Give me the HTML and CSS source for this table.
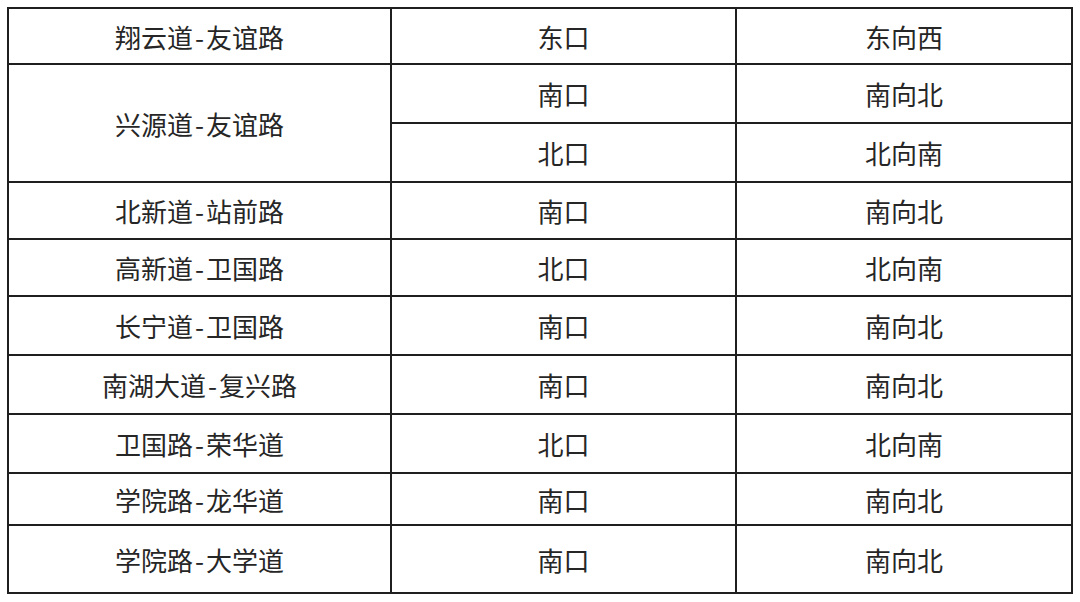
FILE: index.html
```html
<!DOCTYPE html>
<html lang="zh-CN">
<head>
<meta charset="utf-8">
<title>路口方向表</title>
<link rel="stylesheet" href="styles.css">
</head>
<body>
<div class="grid">
  <div class="cell r1">翔云道<span class="dash">-</span>友谊路</div>
  <div class="cell r1">东口</div>
  <div class="cell r1">东向西</div>

  <div class="cell span2">兴源道<span class="dash">-</span>友谊路</div>
  <div class="cell r2">南口</div>
  <div class="cell r2">南向北</div>
  <div class="cell r3">北口</div>
  <div class="cell r3">北向南</div>

  <div class="cell r4">北新道<span class="dash">-</span>站前路</div>
  <div class="cell r4">南口</div>
  <div class="cell r4">南向北</div>

  <div class="cell r5">高新道<span class="dash">-</span>卫国路</div>
  <div class="cell r5">北口</div>
  <div class="cell r5">北向南</div>

  <div class="cell r6">长宁道<span class="dash">-</span>卫国路</div>
  <div class="cell r6">南口</div>
  <div class="cell r6">南向北</div>

  <div class="cell r7">南湖大道<span class="dash">-</span>复兴路</div>
  <div class="cell r7">南口</div>
  <div class="cell r7">南向北</div>

  <div class="cell r8">卫国路<span class="dash">-</span>荣华道</div>
  <div class="cell r8">北口</div>
  <div class="cell r8">北向南</div>

  <div class="cell r9">学院路<span class="dash">-</span>龙华道</div>
  <div class="cell r9">南口</div>
  <div class="cell r9">南向北</div>

  <div class="cell r10">学院路<span class="dash">-</span>大学道</div>
  <div class="cell r10">南口</div>
  <div class="cell r10">南向北</div>
</div>
</body>
</html>
```
FILE: styles.css
```css
html, body {
  margin: 0;
  padding: 0;
  background: #ffffff;
}

body {
  padding: 7px 0 0 7px;
  font-family: "Noto Sans CJK SC", "Liberation Serif", serif;
  color: #262626;
}

.grid {
  display: grid;
  width: max-content;
  grid-template-columns: 381px 343px 334px;
  grid-template-rows: 54px 57px 57px 55px 55px 57px 57px 57px 50px 66px;
  gap: 2px;
  padding: 2px;
  background: #1f1f1f;
}

.cell {
  background: #ffffff;
  display: flex;
  align-items: center;
  justify-content: center;
  font-size: 26px;
  line-height: 1;
  padding-top: 1px;
  box-sizing: border-box;
}

.dash {
  padding: 0 2px;
}

.span2 {
  grid-row: span 2;
}
```
